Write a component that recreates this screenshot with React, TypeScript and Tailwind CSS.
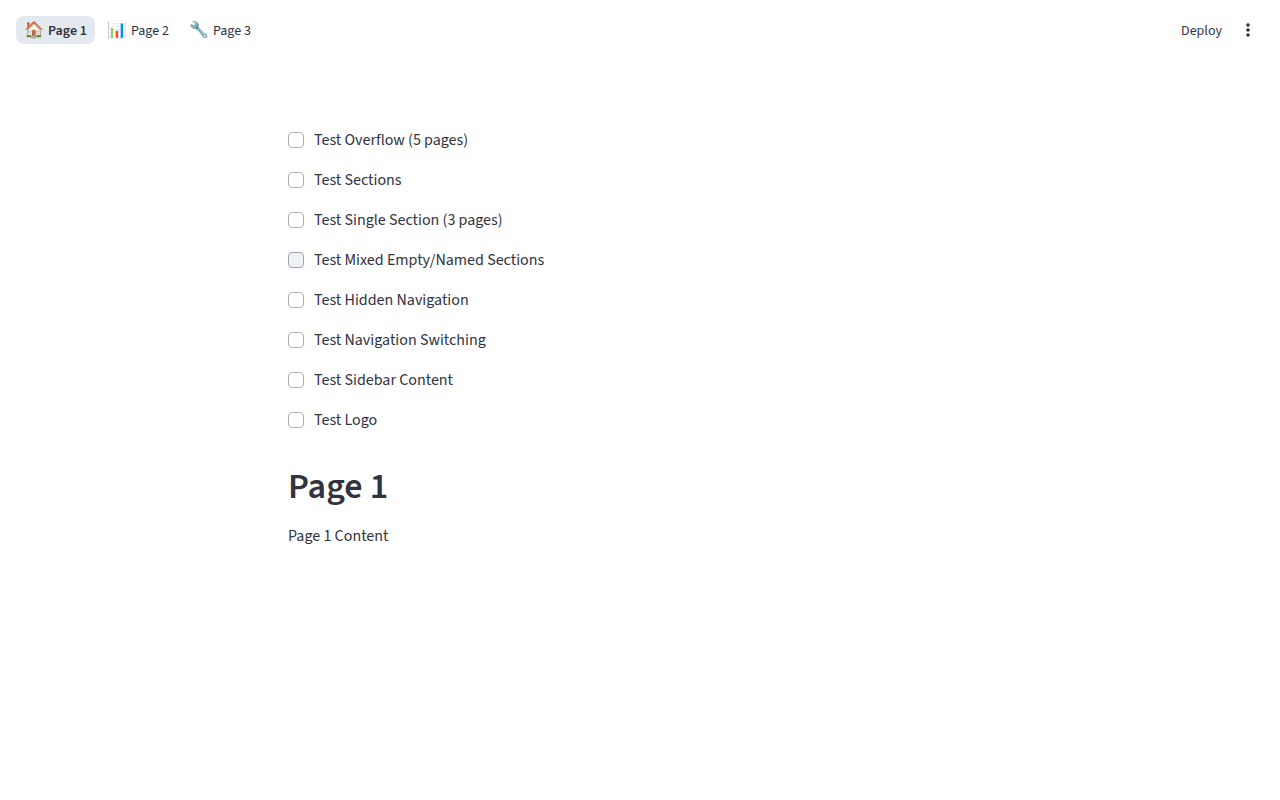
const pages = [
  { icon: "🏠", label: "Page 1", active: true },
  { icon: "📊", label: "Page 2", active: false },
  { icon: "🔧", label: "Page 3", active: false },
];

const options = [
  { label: "Test Overflow (5 pages)", hovered: false },
  { label: "Test Sections", hovered: false },
  { label: "Test Single Section (3 pages)", hovered: false },
  { label: "Test Mixed Empty/Named Sections", hovered: true },
  { label: "Test Hidden Navigation", hovered: false },
  { label: "Test Navigation Switching", hovered: false },
  { label: "Test Sidebar Content", hovered: false },
  { label: "Test Logo", hovered: false },
];

function TopNav() {
  return (
    <nav className="flex items-center gap-1">
      {pages.map((page) => (
        <a
          key={page.label}
          href="#"
          aria-current={page.active ? "page" : undefined}
          className={
            page.active
              ? "flex h-7 items-center gap-1 rounded-lg bg-[#e4e8ef] px-2 text-sm font-semibold"
              : "flex h-7 items-center gap-1 rounded-lg px-2 text-sm"
          }
        >
          <span className="w-5 text-base leading-5 font-normal">{page.icon}</span>
          <span className="pt-0.5">{page.label}</span>
        </a>
      ))}
    </nav>
  );
}

function Toolbar() {
  return (
    <div className="flex items-center">
      <button type="button" className="h-7 px-2 pt-0.5 text-sm">
        Deploy
      </button>
      <button type="button" aria-label="Main menu" className="flex size-9 items-center justify-center">
        <svg viewBox="0 0 20 20" className="size-5" fill="currentColor" aria-hidden="true">
          <circle cx="10" cy="5" r="1.8" />
          <circle cx="10" cy="10" r="1.8" />
          <circle cx="10" cy="15" r="1.8" />
        </svg>
      </button>
    </div>
  );
}

export default function App() {
  return (
    <div className="min-h-screen bg-white font-['Source_Sans_3','Source_Sans_Pro','Noto_Sans',sans-serif] text-[#31333f]">
      <header className="flex h-15 items-center justify-between pr-[14px] pl-4">
        <TopNav />
        <Toolbar />
      </header>
      <main className="mx-auto max-w-[704px] pt-17">
        <div className="flex flex-col items-start gap-4">
          {options.map((option) => (
            <label key={option.label} className="flex items-center gap-[10px] text-base leading-6">
              <input
                type="checkbox"
                className={
                  option.hovered
                    ? "size-4 appearance-none rounded border border-[#a3a5ae] bg-[#f0f2f6]"
                    : "size-4 appearance-none rounded border border-[#adadb2] bg-white"
                }
              />
              <span>{option.label}</span>
            </label>
          ))}
        </div>
        <h1 className="mt-8 text-4xl leading-[46px] font-semibold">Page 1</h1>
        <p className="mt-[14px] text-base leading-6">Page 1 Content</p>
      </main>
    </div>
  );
}
